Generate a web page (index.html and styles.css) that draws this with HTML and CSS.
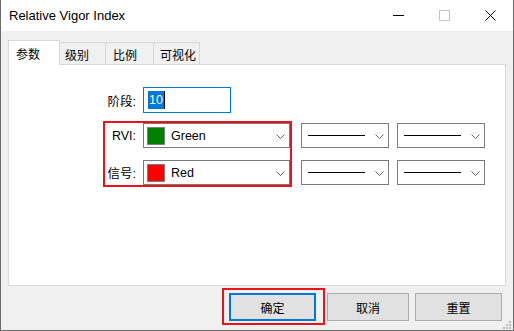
FILE: index.html
```html
<!DOCTYPE html>
<html lang="zh">
<head>
    <meta charset="UTF-8">
    <title>Relative Vigor Index</title>
    <link rel="stylesheet" href="styles.css">
</head>
<body>
    <div class="window">
        <div class="titlebar">
            <span class="title">Relative Vigor Index</span>
            <span class="ctl">
                <svg width="11" height="1" viewBox="0 0 11 1"><rect width="11" height="1" fill="#000"/></svg>
            </span>
            <span class="ctl">
                <svg width="11" height="11" viewBox="0 0 11 11"><rect x="0.5" y="0.5" width="10" height="10" fill="none" stroke="#c4c4c4"/></svg>
            </span>
            <span class="ctl">
                <svg width="11" height="11" viewBox="0 0 11 11"><path d="M0.5 0.5 L10.5 10.5 M10.5 0.5 L0.5 10.5" stroke="#000" stroke-width="1"/></svg>
            </span>
        </div>

        <div class="client">
            <div class="tabs">
                <div class="tab active">参数</div>
                <div class="tab t-levels">级别</div>
                <div class="tab t-scale">比例</div>
                <div class="tab t-visual">可视化</div>
            </div>

            <div class="panel">
                <div class="row row-period">
                    <span class="lbl">阶段:</span>
                    <div class="input"><span class="selected">10</span><span class="caret"></span></div>
                </div>
                <div class="row row-main">
                    <span class="lbl">RVI:</span>
                    <div class="select sel-color">
                        <span class="swatch green"></span><span class="name">Green</span>
                        <svg class="chev" width="9" height="5" viewBox="0 0 9 5"><path d="M0.5 0.5 L4.5 4.5 L8.5 0.5" fill="none" stroke="#606060"/></svg>
                    </div>
                    <div class="select sel-line first">
                        <span class="line"></span>
                        <svg class="chev" width="9" height="5" viewBox="0 0 9 5"><path d="M0.5 0.5 L4.5 4.5 L8.5 0.5" fill="none" stroke="#606060"/></svg>
                    </div>
                    <div class="select sel-line">
                        <span class="line"></span>
                        <svg class="chev" width="9" height="5" viewBox="0 0 9 5"><path d="M0.5 0.5 L4.5 4.5 L8.5 0.5" fill="none" stroke="#606060"/></svg>
                    </div>
                </div>
                <div class="row row-signal">
                    <span class="lbl">信号:</span>
                    <div class="select sel-color">
                        <span class="swatch red"></span><span class="name">Red</span>
                        <svg class="chev" width="9" height="5" viewBox="0 0 9 5"><path d="M0.5 0.5 L4.5 4.5 L8.5 0.5" fill="none" stroke="#606060"/></svg>
                    </div>
                    <div class="select sel-line first">
                        <span class="line"></span>
                        <svg class="chev" width="9" height="5" viewBox="0 0 9 5"><path d="M0.5 0.5 L4.5 4.5 L8.5 0.5" fill="none" stroke="#606060"/></svg>
                    </div>
                    <div class="select sel-line">
                        <span class="line"></span>
                        <svg class="chev" width="9" height="5" viewBox="0 0 9 5"><path d="M0.5 0.5 L4.5 4.5 L8.5 0.5" fill="none" stroke="#606060"/></svg>
                    </div>
                </div>
                <div class="mark mark-inputs"></div>
            </div>

            <div class="footer">
                <button class="btn btn-ok">确定</button>
                <button class="btn btn-cancel">取消</button>
                <button class="btn btn-reset">重置</button>
            </div>
        </div>

        <div class="mark mark-ok"></div>
        <svg class="grip" width="9" height="9" viewBox="0 0 9 9">
            <rect x="7" y="1" width="2" height="2" fill="#bdbdbd"/>
            <rect x="4" y="4" width="2" height="2" fill="#bdbdbd"/>
            <rect x="7" y="4" width="2" height="2" fill="#bdbdbd"/>
            <rect x="1" y="7" width="2" height="2" fill="#bdbdbd"/>
            <rect x="4" y="7" width="2" height="2" fill="#bdbdbd"/>
            <rect x="7" y="7" width="2" height="2" fill="#bdbdbd"/>
        </svg>
    </div>
</body>
</html>
```

FILE: styles.css
```css
body {
    margin: 0;
    font-family: 'Liberation Sans', 'Noto Sans CJK SC', sans-serif;
    font-size: 12px;
    color: #000;
    background-color: #3a3a3a;
}
.window {
    position: relative;
    width: 514px;
    height: 331px;
    box-sizing: border-box;
    border: 1px solid #6a6a6a;
    border-top: none;
    background-color: #f0f0f0;
    display: flex;
    flex-direction: column;
}
.titlebar {
    height: 31px;
    background-color: #fff;
    display: flex;
    align-items: center;
    flex-shrink: 0;
}
.title {
    flex: 1;
    padding-left: 8px;
    font-size: 13px;
}
.ctl {
    width: 46px;
    height: 31px;
    display: flex;
    align-items: center;
    justify-content: center;
}
.client {
    flex: 1;
    padding: 9px 0 0 7px;
}
.tabs {
    display: flex;
    align-items: flex-end;
    height: 25px;
}
.tab {
    box-sizing: border-box;
    height: 23px;
    border: 1px solid #d9d9d9;
    border-bottom: none;
    background-color: #f0f0f0;
    display: flex;
    align-items: center;
    padding-left: 6px;
    margin-left: -1px;
    font-family: 'Noto Sans CJK SC', sans-serif;
}
.tab.active {
    position: relative;
    z-index: 1;
    height: 25px;
    width: 52px;
    margin-left: 0;
    padding-left: 7px;
    background-color: #fff;
}
.t-levels { width: 47px; padding-left: 5px; }
.t-scale { width: 49px; padding-left: 7px; }
.t-visual { width: 47px; padding-left: 6px; }
.panel {
    position: relative;
    box-sizing: border-box;
    width: 498px;
    height: 222px;
    margin-top: -1px;
    border: 1px solid #d9d9d9;
    background-color: #fff;
    padding-top: 22px;
}
.row {
    display: flex;
    align-items: center;
}
.row-main { margin-top: 10px; }
.row-signal { margin-top: 12px; }
.lbl {
    width: 127px;
    margin-right: 7px;
    text-align: right;
    font-size: 12.5px;
}
.input {
    box-sizing: border-box;
    width: 88px;
    height: 26px;
    border: 1px solid #0078d7;
    display: flex;
    align-items: center;
    padding-left: 4px;
}
.selected {
    background-color: #0078d7;
    color: #fff;
    font-size: 12.5px;
    line-height: 18px;
    padding: 0 1px;
}
.caret {
    width: 1px;
    height: 18px;
    background-color: #000;
}
.select {
    position: relative;
    box-sizing: border-box;
    height: 25px;
    border: 1px solid #7a7a7a;
    background-color: #fff;
    display: flex;
    align-items: center;
}
.sel-color {
    width: 147px;
    padding-left: 3px;
}
.sel-line {
    width: 88px;
    padding-left: 6px;
    margin-left: 8px;
}
.sel-line.first {
    margin-left: 11px;
}
.swatch {
    box-sizing: border-box;
    width: 18px;
    height: 18px;
    border: 1px solid #808080;
}
.swatch.green { background-color: #008000; }
.swatch.red { background-color: #ff0000; }
.name {
    margin-left: 6px;
    font-size: 12.5px;
}
.line {
    width: 57px;
    height: 1px;
    background-color: #000;
}
.chev {
    position: absolute;
    right: 4px;
    top: 10px;
}
.footer {
    display: flex;
    margin-top: 7px;
    padding-left: 221px;
}
.btn {
    box-sizing: border-box;
    height: 28px;
    border: 1px solid #adadad;
    background-color: #e1e1e1;
    font-family: 'Noto Sans CJK SC', sans-serif;
    font-size: 12px;
    color: #000;
    padding: 0;
}
.btn-ok {
    width: 87px;
    border: 2px solid #0078d7;
}
.btn-cancel {
    width: 82px;
    margin-left: 11px;
}
.btn-reset {
    width: 87px;
    margin-left: 6px;
}
.mark {
    position: absolute;
    box-sizing: border-box;
    border: 2px solid #e8131b;
}
.mark-inputs {
    left: 94px;
    top: 56px;
    width: 189px;
    height: 66px;
}
.mark-ok {
    left: 221px;
    top: 288px;
    width: 103px;
    height: 37px;
}
.grip {
    position: absolute;
    right: 2px;
    bottom: 1px;
}
```
